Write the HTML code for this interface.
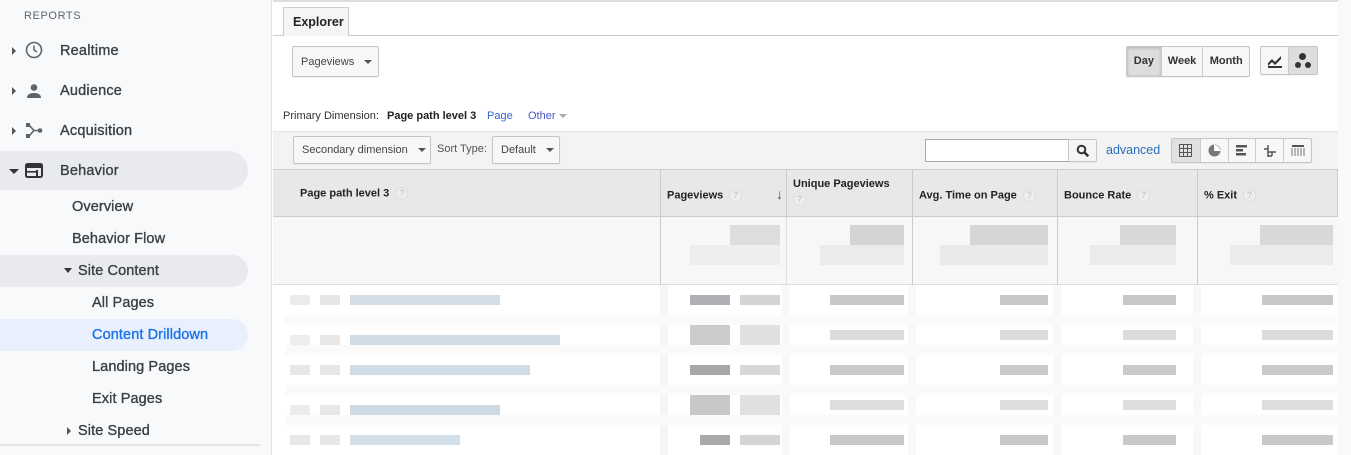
<!DOCTYPE html>
<html><head><meta charset="utf-8"><style>
*{box-sizing:border-box;margin:0;padding:0}
body{width:1351px;height:455px;overflow:hidden;background:#fff;font-family:"Liberation Sans",Arial,sans-serif;position:relative}
.a{position:absolute}
#side{left:0;top:0;width:272px;height:455px;background:#f8f9fa;border-right:1px solid #e3e3e3}
.nav{position:absolute;font-size:14.5px;color:#3c4043;letter-spacing:.2px;-webkit-text-stroke:.35px #3c4043}
.sub{position:absolute;font-size:14.5px;color:#3c4043;-webkit-text-stroke:.35px #3c4043;letter-spacing:.1px}
.tri{position:absolute;width:0;height:0}
.btn{position:absolute;border:1px solid #c6c6c6;border-radius:2px;background:#f7f7f7;font-size:11px;color:#444;box-shadow:0 1px 1px rgba(0,0,0,.05)}
.caret{display:inline-block;border-left:4px solid transparent;border-right:4px solid transparent;border-top:4px solid #555;vertical-align:middle;margin-left:10px}
.th{position:absolute;top:170px;height:46px;font-size:11px;font-weight:bold;color:#222;border-right:1px solid #ccc}
.q{display:inline-block;width:13px;height:13px;border-radius:50%;background:#eee;border:1px solid #ddd;color:#bbb;font-size:9px;text-align:center;line-height:11px;vertical-align:middle;margin-left:6px;font-weight:normal}
.b{position:absolute;height:10px}
</style></head><body>
<div id="side" class="a">
 <div class="a" style="left:24px;top:10px;font-size:11px;color:#5f6368;letter-spacing:.6px">REPORTS</div>
 <div class="a" style="left:0;top:151px;width:248px;height:39px;background:#e8eaed;border-radius:0 20px 20px 0"></div>
 <div class="a" style="left:0;top:255px;width:248px;height:32px;background:#e8eaed;border-radius:0 16px 16px 0"></div>
 <div class="a" style="left:0;top:319px;width:248px;height:32px;background:#e8f0fe;border-radius:0 16px 16px 0"></div>
 <div class="tri" style="left:12px;top:47px;border-top:4px solid transparent;border-bottom:4px solid transparent;border-left:4px solid #555"></div>
 <div class="tri" style="left:12px;top:87px;border-top:4px solid transparent;border-bottom:4px solid transparent;border-left:4px solid #555"></div>
 <div class="tri" style="left:12px;top:127px;border-top:4px solid transparent;border-bottom:4px solid transparent;border-left:4px solid #555"></div>
 <div class="tri" style="left:9px;top:169px;border-left:5px solid transparent;border-right:5px solid transparent;border-top:5px solid #333"></div>
 <div class="tri" style="left:64px;top:268px;border-left:4px solid transparent;border-right:4px solid transparent;border-top:5px solid #333"></div>
 <div class="tri" style="left:67px;top:427px;border-top:4px solid transparent;border-bottom:4px solid transparent;border-left:4px solid #555"></div>
 <svg class="a" style="left:25px;top:41px" width="18" height="18" viewBox="0 0 18 18"><circle cx="9" cy="9" r="7.5" fill="none" stroke="#5f6368" stroke-width="1.6"/><path d="M9 4.5V9l3 2" fill="none" stroke="#5f6368" stroke-width="1.5"/></svg>
 <svg class="a" style="left:26px;top:83px" width="16" height="16" viewBox="0 0 16 16"><circle cx="8" cy="4.5" r="3.3" fill="#5f6368"/><path d="M1 15c0-4 3.5-5 7-5s7 1 7 5z" fill="#5f6368"/></svg>
 <svg class="a" style="left:25px;top:122px" width="18" height="17" viewBox="0 0 18 17"><rect x="1" y="1" width="4" height="4" fill="#5f6368"/><rect x="1" y="12" width="4" height="4" fill="#5f6368"/><circle cx="15" cy="8.5" r="2.3" fill="#5f6368"/><path d="M4 3l5 5.5h5M4 14l5-5.5" fill="none" stroke="#5f6368" stroke-width="1.6"/></svg>
 <svg class="a" style="left:25px;top:163px" width="18" height="15" viewBox="0 0 18 15"><rect x="1" y="1" width="16" height="13" rx="1.5" fill="none" stroke="#333" stroke-width="2"/><rect x="1" y="1" width="16" height="4" fill="#333"/><rect x="11" y="7" width="2" height="7" fill="#333"/><rect x="1" y="8" width="10" height="1.6" fill="#333"/></svg>
 <div class="nav" style="left:60px;top:43px">Realtime</div>
 <div class="nav" style="left:60px;top:83px">Audience</div>
 <div class="nav" style="left:60px;top:123px">Acquisition</div>
 <div class="nav" style="left:60px;top:163px">Behavior</div>
 <div class="sub" style="left:72px;top:199px">Overview</div>
 <div class="sub" style="left:72px;top:231px">Behavior Flow</div>
 <div class="sub" style="left:78px;top:263px">Site Content</div>
 <div class="sub" style="left:92px;top:295px">All Pages</div>
 <div class="sub" style="left:92px;top:327px;color:#1a73e8;-webkit-text-stroke-color:#1a73e8">Content Drilldown</div>
 <div class="sub" style="left:92px;top:359px">Landing Pages</div>
 <div class="sub" style="left:92px;top:391px">Exit Pages</div>
 <div class="sub" style="left:78px;top:423px">Site Speed</div>
 <div class="a" style="left:0;top:444px;width:260px;height:2px;background:#e4e4e4"></div>
</div>
<div class="a" style="left:1338px;top:0;width:13px;height:455px;background:#f8f9fa"></div>
<div class="a" style="left:273px;top:0;width:1065px;height:2px;background:#ddd"></div>
<div class="a" style="left:273px;top:35px;width:1065px;height:1px;background:#ccc"></div>
<div class="a" style="left:283px;top:7px;width:66px;height:29px;background:#f5f5f5;border:1px solid #ccc;border-bottom:none;font-size:12.5px;font-weight:bold;color:#222;padding:7px 0 0 9px">Explorer</div>
<div class="btn" style="left:292px;top:46px;width:87px;height:31px;padding:9px 0 0 8px">Pageviews<span class="caret"></span></div>
<div class="btn" style="left:1126px;top:46px;width:124px;height:31px;font-weight:bold;color:#333;display:flex;overflow:hidden">
 <div style="width:34px;background:#ddd;text-align:center;line-height:29px;box-shadow:inset 0 1px 3px rgba(0,0,0,.2)">Day</div>
 <div style="width:42px;text-align:center;line-height:29px;border-left:1px solid #ccc">Week</div>
 <div style="width:47px;text-align:center;line-height:29px;border-left:1px solid #ccc">Month</div>
</div>
<div class="btn" style="left:1260px;top:46px;width:58px;height:29px;display:flex;overflow:hidden">
 <div style="width:28px;display:flex;align-items:center;justify-content:center"><svg width="16" height="14" viewBox="0 0 16 14"><path d="M1 9l4-4 3 3 6-6v3L8 11 5 8l-4 4z" fill="#333"/><rect x="1" y="12" width="14" height="2" fill="#333"/></svg></div>
 <div style="width:30px;background:#ddd;border-left:1px solid #ccc;position:relative"><span class="a" style="left:10px;top:6px;width:7px;height:7px;border-radius:50%;background:#333"></span><span class="a" style="left:6px;top:15px;width:6px;height:6px;border-radius:50%;background:#333"></span><span class="a" style="left:16px;top:15px;width:6px;height:6px;border-radius:50%;background:#333"></span></div>
</div>
<div class="a" style="left:283px;top:110px;font-size:11px;color:#333">Primary Dimension:</div>
<div class="a" style="left:387px;top:110px;font-size:11px;color:#222;font-weight:bold">Page path level 3</div>
<div class="a" style="left:487px;top:110px;font-size:11px;color:#3366cc">Page</div>
<div class="a" style="left:528px;top:110px;font-size:11px;color:#4a55c8">Other <span style="display:inline-block;border-left:4px solid transparent;border-right:4px solid transparent;border-top:4px solid #aaa;vertical-align:middle"></span></div>
<div class="a" style="left:273px;top:131px;width:1065px;height:38px;background:#f3f3f3;border-top:1px solid #e3e3e3"></div>
<div class="btn" style="left:293px;top:136px;width:138px;height:28px;padding:7px 0 0 8px">Secondary dimension<span class="caret"></span></div>
<div class="a" style="left:437px;top:143px;font-size:11px;color:#555">Sort Type:</div>
<div class="btn" style="left:492px;top:136px;width:68px;height:28px;padding:7px 0 0 8px">Default<span class="caret"></span></div>
<div class="a" style="left:925px;top:139px;width:145px;height:23px;background:#fff;border:1px solid #aaa"></div>
<div class="btn" style="left:1068px;top:139px;width:29px;height:23px;background:#f5f5f5"><svg style="position:absolute;left:7px;top:4px" width="14" height="14" viewBox="0 0 14 14"><circle cx="5.5" cy="5.5" r="3.8" fill="none" stroke="#333" stroke-width="2"/><path d="M8.3 8.3l4 4" stroke="#333" stroke-width="2.5"/></svg></div>
<div class="a" style="left:1106px;top:143px;font-size:12.5px;color:#2a6ebb">advanced</div>
<div class="btn" style="left:1171px;top:138px;width:141px;height:25px;display:flex;overflow:hidden;background:#f7f7f7">
 <div style="width:28px;background:#e0e0e0;display:flex;align-items:center;justify-content:center"><svg width="13" height="13" viewBox="0 0 13 13"><path d="M.5.5h12v12H.5zM4.5.5v12M8.5.5v12M.5 4.5h12M.5 8.5h12" fill="none" stroke="#555"/></svg></div>
 <div style="width:28px;border-left:1px solid #ccc;display:flex;align-items:center;justify-content:center"><svg width="13" height="13" viewBox="0 0 13 13"><circle cx="6.5" cy="6.5" r="6" fill="#777"/><path d="M6.5 6.5V1A5.5 5.5 0 0 1 12 6.5z" fill="#fff"/><path d="M6.5 .5v6h6" fill="none" stroke="#fff"/></svg></div>
 <div style="width:28px;border-left:1px solid #ccc;display:flex;align-items:center;justify-content:center"><svg width="12" height="11" viewBox="0 0 12 11"><rect width="11" height="2.5" fill="#555"/><rect y="4" width="7" height="2.5" fill="#555"/><rect y="8" width="10" height="2.5" fill="#555"/></svg></div>
 <div style="width:28px;border-left:1px solid #ccc;display:flex;align-items:center;justify-content:center"><svg width="12" height="12" viewBox="0 0 12 12"><path d="M4 0v12M0 4h4M4 7h8M8 7v4M4 11h4" fill="none" stroke="#555" stroke-width="1.5"/></svg></div>
 <div style="width:28px;border-left:1px solid #ccc;display:flex;align-items:center;justify-content:center"><svg width="14" height="11" viewBox="0 0 14 11"><path d="M1 1h12" stroke="#555" stroke-width="2"/><path d="M1 3v8M4 3v8M7 3v8M10 3v8M13 3v8" stroke="#777"/></svg></div>
</div>
<div class="a" style="left:273px;top:169px;width:1065px;height:48px;background:#e8e8e8;border-top:1px solid #ccc;border-bottom:1px solid #ccc"></div>
<div class="th" style="left:273px;width:388px;padding:17px 0 0 27px">Page path level 3<span class="q">?</span></div>
<div class="th" style="left:661px;width:126px;padding:19px 0 0 6px">Pageviews<span class="q">?</span><span style="position:absolute;right:3px;top:16px;font-size:14px;color:#555">&#8595;</span></div>
<div class="th" style="left:787px;width:126px;padding:8px 0 0 6px">Unique Pageviews<br><span class="q" style="margin:3px 0 0 0">?</span></div>
<div class="th" style="left:913px;width:145px;padding:19px 0 0 6px">Avg. Time on Page<span class="q">?</span></div>
<div class="th" style="left:1058px;width:140px;padding:19px 0 0 6px">Bounce Rate<span class="q">?</span></div>
<div class="th" style="left:1198px;width:140px;padding:19px 0 0 6px">% Exit<span class="q">?</span></div>
<div class="a" style="left:273px;top:217px;width:1065px;height:68px;background:#f7f7f7;border-bottom:1px solid #ddd"></div>
<div class="a" style="left:660px;top:217px;width:1px;height:68px;background:#ccc"></div>
<div class="a" style="left:786px;top:217px;width:1px;height:68px;background:#ddd"></div>
<div class="a" style="left:912px;top:217px;width:1px;height:68px;background:#ccc"></div>
<div class="a" style="left:1057px;top:217px;width:1px;height:68px;background:#ccc"></div>
<div class="a" style="left:1197px;top:217px;width:1px;height:68px;background:#ccc"></div>
<div class="a" style="left:660px;top:285px;width:8px;height:170px;background:#f5f5f5"></div>
<div class="a" style="left:782px;top:285px;width:8px;height:170px;background:#f8f8f8"></div>
<div class="a" style="left:908px;top:285px;width:8px;height:170px;background:#f8f8f8"></div>
<div class="a" style="left:1053px;top:285px;width:8px;height:170px;background:#f8f8f8"></div>
<div class="a" style="left:1193px;top:285px;width:8px;height:170px;background:#f8f8f8"></div>
<!-- total row blur -->
<div class="b" style="left:730px;top:225px;width:50px;height:20px;background:#ddd"></div>
<div class="b" style="left:690px;top:245px;width:90px;height:20px;background:#eee"></div>
<div class="b" style="left:850px;top:225px;width:54px;height:20px;background:#d4d4d4"></div>
<div class="b" style="left:820px;top:245px;width:84px;height:20px;background:#ebebeb"></div>
<div class="b" style="left:970px;top:225px;width:78px;height:20px;background:#d6d6d6"></div>
<div class="b" style="left:940px;top:245px;width:108px;height:20px;background:#eaeaea"></div>
<div class="b" style="left:1120px;top:225px;width:56px;height:20px;background:#d8d8d8"></div>
<div class="b" style="left:1090px;top:245px;width:86px;height:20px;background:#ebebeb"></div>
<div class="b" style="left:1260px;top:225px;width:73px;height:20px;background:#d8d8d8"></div>
<div class="b" style="left:1230px;top:245px;width:103px;height:20px;background:#ebebeb"></div>
<!-- rows -->
<div class="a" style="left:285px;top:315px;width:1053px;height:10px;background:#fafafa"></div>
<div class="a" style="left:285px;top:345px;width:1053px;height:10px;background:#fafafa"></div>
<div class="a" style="left:285px;top:385px;width:1053px;height:10px;background:#fafafa"></div>
<div class="a" style="left:285px;top:415px;width:1053px;height:10px;background:#fafafa"></div>

<div class="b" style="left:290px;top:295px;width:20px;background:#eceaec"></div><div class="b" style="left:320px;top:295px;width:20px;background:#e6e6e6"></div><div class="b" style="left:350px;top:295px;width:150px;background:#d2dde6"></div>
<div class="b" style="left:290px;top:335px;width:20px;background:#ededed"></div><div class="b" style="left:320px;top:335px;width:20px;background:#e8e8e8"></div><div class="b" style="left:350px;top:335px;width:210px;background:#cfdce6"></div>
<div class="b" style="left:290px;top:365px;width:20px;background:#e8e8e6"></div><div class="b" style="left:320px;top:365px;width:20px;background:#e6e6e6"></div><div class="b" style="left:350px;top:365px;width:180px;background:#d0dde6"></div>
<div class="b" style="left:290px;top:405px;width:20px;background:#ececee"></div><div class="b" style="left:320px;top:405px;width:20px;background:#e8e8e8"></div><div class="b" style="left:350px;top:405px;width:150px;background:#cdd9e3"></div>
<div class="b" style="left:290px;top:435px;width:20px;background:#e8e8e8"></div><div class="b" style="left:320px;top:435px;width:20px;background:#e6e6e6"></div><div class="b" style="left:350px;top:435px;width:110px;background:#d3dfe8"></div>

<div class="b" style="left:690px;top:295px;width:40px;background:#b0b0b4"></div><div class="b" style="left:740px;top:295px;width:40px;background:#d4d4d4"></div>
<div class="b" style="left:690px;top:325px;width:40px;height:20px;background:#ccc"></div><div class="b" style="left:740px;top:325px;width:40px;height:20px;background:#e0e0e0"></div>
<div class="b" style="left:690px;top:365px;width:40px;background:#a8a8a8"></div><div class="b" style="left:740px;top:365px;width:40px;background:#d8d8d8"></div>
<div class="b" style="left:690px;top:395px;width:40px;height:20px;background:#c8c8c8"></div><div class="b" style="left:740px;top:395px;width:40px;height:20px;background:#e0e0e0"></div>
<div class="b" style="left:700px;top:435px;width:30px;background:#aaa"></div><div class="b" style="left:740px;top:435px;width:40px;background:#d4d4d4"></div>

<script>
var cols=[[830,904],[1000,1048],[1123,1176],[1262,1333]];
var ys=[[295,'#c8c8c8'],[330,'#dcdcdc'],[365,'#cacaca'],[400,'#dedede'],[435,'#c8c8c8']];
var h='';
cols.forEach(function(c,i){ys.forEach(function(y){h+='<div class="b" style="left:'+c[0]+'px;top:'+y[0]+'px;width:'+(c[1]-c[0])+'px;background:'+y[1]+'"></div>';});});
document.write(h);
</script>
</body></html>
